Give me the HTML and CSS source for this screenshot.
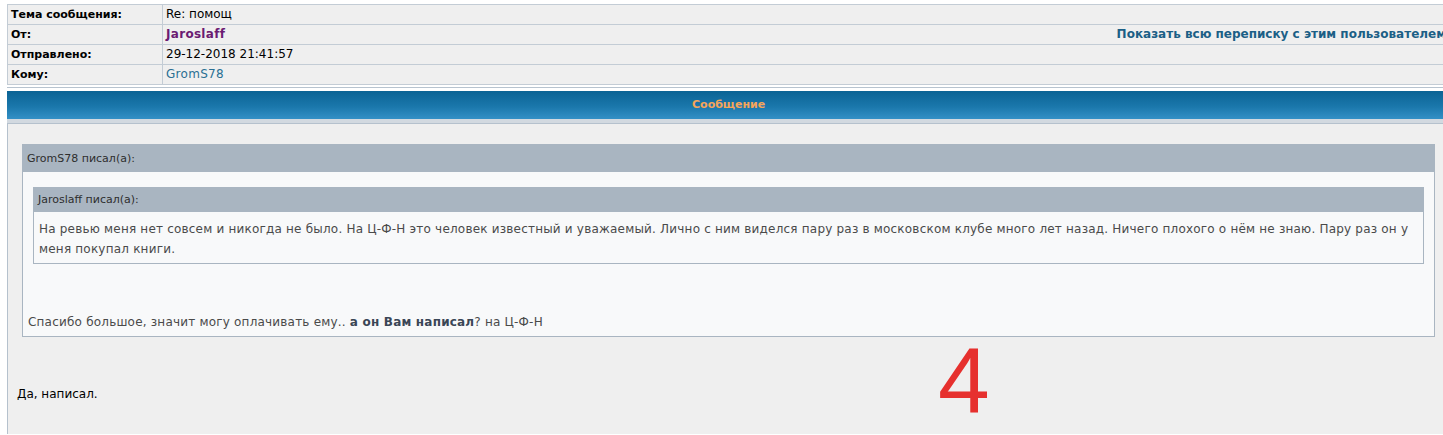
FILE: index.html
```html
<!DOCTYPE html>
<html>
	<head>
		<meta charset="utf-8">
		<title>Личное сообщение</title>
		<link rel="stylesheet" href="styles.css">
	</head>
	<body>
		<div class="wrap">
			<table class="info">
				<tr>
					<td class="label">Тема сообщения:</td>
					<td class="value">Re: помощ</td>
				</tr>
				<tr>
					<td class="label">От:</td>
					<td class="value"><span class="author">Jaroslaff</span><a class="all" href="#">Показать всю переписку с этим пользователем</a></td>
				</tr>
				<tr>
					<td class="label">Отправлено:</td>
					<td class="value">29-12-2018 21:41:57</td>
				</tr>
				<tr>
					<td class="label">Кому:</td>
					<td class="value"><a class="user" href="#">GromS78</a></td>
				</tr>
			</table>

			<div class="cat">
				<div class="cat-bar">Сообщение</div>
				<div class="cat-foot"></div>
			</div>

			<div class="post">
				<div class="quote">
					<div class="quote-title">GromS78 писал(а):</div>
					<div class="quote-body">
						<div class="quote inner">
							<div class="quote-title">Jaroslaff писал(а):</div>
							<div class="quote-body">На ревью меня нет совсем и никогда не было. На Ц-Ф-Н это человек известный и уважаемый. Лично с ним виделся пару раз в московском клубе много лет назад. Ничего плохого о нём не знаю. Пару раз он у меня покупал книги.</div>
						</div>
						<div class="reply">Спасибо большое, значит могу оплачивать ему.. <b>а он Вам написал</b>? на Ц-Ф-Н</div>
					</div>
				</div>
				<div class="answer">Да, написал.</div>
				<div class="mark">4</div>
			</div>
		</div>
	</body>
</html>
```

FILE: styles.css
```css
*{
	margin: 0;
	padding: 0;
}
html,body{
	background-color: #ffffff;
	overflow: hidden;
}
body{
	font-family: "DejaVu Sans", Verdana, sans-serif;
	font-size: 11px;
	color: #000000;
	height: 435px;
}
a{
	text-decoration: none;
}
.wrap{
	width: 1470px;
	margin-left: 7px;
	padding-top: 4px;
}
.info{
	width: 100%;
	border-collapse: collapse;
	background-color: #efefef;
}
.info td{
	border: 1px solid #c3ccd5;
	height: 19px;
	padding: 0 3px;
	line-height: 19px;
	white-space: nowrap;
}
.info .label{
	width: 148px;
	font-weight: bold;
}
.info .value{
	padding-left: 3px;
	font-size: 12px;
}
.info .author{
	font-weight: bold;
	color: #6b1b72;
	letter-spacing: 0.3px;
}
.info .user{
	color: #2a6f93;
	letter-spacing: 0.3px;
}
.info .all{
	float: right;
	font-weight: bold;
	color: #1b5f86;
	margin-right: 27px;
}
.cat{
	margin-top: 2px;
	border-top: 1px solid #b7c3cf;
	padding-top: 3px;
}
.cat-bar{
	height: 28px;
	line-height: 28px;
	background: linear-gradient(#0b6394, #1a77ab 55%, #3390c6);
	color: #f5a55a;
	font-weight: bold;
	text-align: left;
	padding-left: 685px;
}
.cat-foot{
	height: 4px;
	background-color: #d2d9e0;
	border-bottom: 1px solid #b5c1cd;
}
.post{
	position: relative;
	background-color: #efefef;
	border-left: 1px solid #b5c1cd;
	padding: 20px 0 0 14px;
	height: 290px;
}
.quote{
	width: 1411px;
	border: 1px solid #a9b5c1;
	background-color: #f8f9fa;
}
.quote-title{
	background-color: #a9b5c1;
	color: #2e2e2e;
	height: 27px;
	line-height: 27px;
	padding-left: 4px;
	font-size: 11px;
}
.quote-body{
	padding: 15px 10px 4px 10px;
	font-size: 12px;
	line-height: 20px;
	letter-spacing: 0.2px;
	color: #4a4a4a;
}
.quote.inner{
	width: auto;
}
.inner .quote-title{
	height: 24px;
	line-height: 24px;
	letter-spacing: 0;
}
.inner .quote-body{
	padding: 7px 5px 4px 5px;
}
.reply{
	margin-top: 48px;
	margin-left: -5px;
}
.reply b{
	color: #3a4656;
}
.answer{
	margin-top: 47px;
	margin-left: -5px;
	font-size: 12px;
	line-height: 20px;
	color: #000000;
}
.mark{
	position: absolute;
	left: 930px;
	top: 206px;
	font-family: "Liberation Sans", Arial, sans-serif;
	font-size: 93px;
	line-height: 100px;
	color: #e6302e;
}
```
